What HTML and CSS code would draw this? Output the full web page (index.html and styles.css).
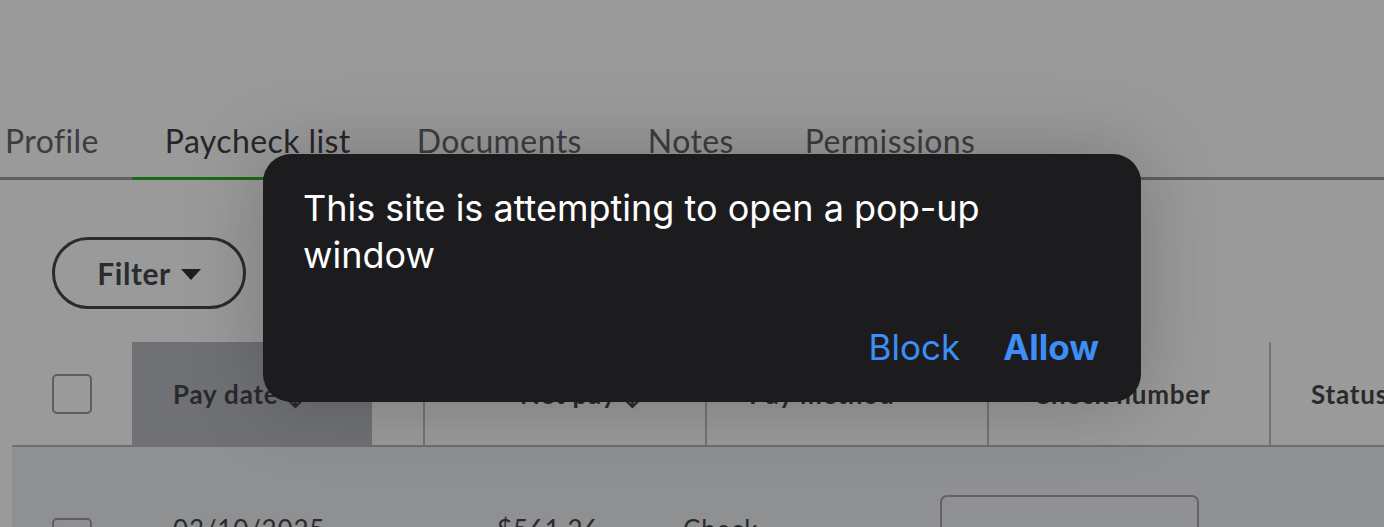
FILE: index.html
```html
<!DOCTYPE html>
<html lang="en">
<head>
  <meta charset="UTF-8" />
  <title>Paycheck list</title>
  <link rel="stylesheet" href="styles.css">
</head>
<body>
<div class="page">
  <nav class="tabs">
    <a class="tab">Profile</a>
    <a class="tab active">Paycheck list</a>
    <a class="tab">Documents</a>
    <a class="tab">Notes</a>
    <a class="tab">Permissions</a>
  </nav>

  <div class="toolbar">
    <button class="filter">Filter <span class="caret"></span></button>
  </div>

  <div class="table">
    <div class="row head">
      <div class="cell c-check"><span class="box"></span></div>
      <div class="cell c-date sorted">Pay date ↓</div>
      <div class="cell c-gap"></div>
      <div class="cell c-net sep">Net pay ↓</div>
      <div class="cell c-method sep">Pay method</div>
      <div class="cell c-num sep">Check number</div>
      <div class="cell c-status sep">Status</div>
    </div>
    <div class="row body">
      <div class="cell c-check"><span class="box"></span></div>
      <div class="cell c-date">03/10/2025</div>
      <div class="cell c-gap"></div>
      <div class="cell c-net">$561.26</div>
      <div class="cell c-method">Check</div>
      <div class="cell c-num"><span class="field"></span></div>
      <div class="cell c-status"></div>
    </div>
  </div>
</div>

<!-- popup prompt -->
<div class="dialog">
  <p class="msg">This site is attempting to open a pop-up window</p>
  <div class="actions">
    <a class="btn">Block</a>
    <a class="btn strong">Allow</a>
  </div>
</div>
</body>
</html>
```

FILE: styles.css
```css
body { margin: 0; height: 527px; background: #9a9a9a; font-family: Lato, "Noto Sans", sans-serif; color: #2c2c2e; overflow: hidden; }
.page { padding-top: 122px; }

.tabs { display: flex; margin-left: -28px; border-bottom: 3px solid #5f5f62; }
.tab { padding: 0 33px 17px; font-size: 32px; letter-spacing: 0.4px; color: #3d3d40; border-bottom: 3px solid transparent; margin-bottom: -3px; line-height: 38px; }
.tab.active { color: #262628; border-bottom-color: #1b6a13; }
.tab:nth-child(4) { padding-right: 38px; }

.toolbar { padding: 57px 0 0 52px; }
.filter { display: flex; align-items: center; gap: 10px; height: 72px; width: 194px; justify-content: center; border: 3px solid #2b2b2b; border-radius: 36px; background: transparent; font-family: Lato, sans-serif; font-weight: 700; font-size: 30px; letter-spacing: 0.5px; color: #2b2b2d; padding: 0; }
.caret { width: 0; height: 0; border-left: 10px solid transparent; border-right: 10px solid transparent; border-top: 11px solid #1e1e1e; margin-top: 3px; }

.table { margin-top: 33px; margin-left: 12px; }
.row { display: flex; overflow: hidden; }
.row.head { height: 103px; border-bottom: 2px solid #6f6f73; }
.row.body { background: #8f9092; height: 120px; }
.cell { flex-shrink: 0; display: flex; align-items: center; font-size: 26px; letter-spacing: 0.8px; line-height: 32px; box-sizing: border-box; white-space: nowrap; }
.head .cell { font-weight: 700; color: #2a2a2c; }
.body .cell { align-items: flex-start; padding-top: 66px; color: #2a2a2c; }
.c-check { width: 120px; padding-left: 40px; }
.c-date { width: 240px; padding-left: 41px; }
.c-gap { width: 51px; }
.c-net { width: 282px; justify-content: flex-end; padding-right: 62px; }
.c-method { width: 282px; padding-left: 42px; }
.c-num { width: 282px; padding-left: 44px; }
.c-status { width: 200px; padding-left: 40px; }
.sep { border-left: 2px solid #737377; }
.sorted { background: #6f7175; }
.box { display: block; width: 36px; height: 36px; border: 2px solid #5e5e62; border-radius: 5px; }
.body .c-check { padding-top: 71px; }
.body .c-net { justify-content: flex-start; padding: 66px 0 0 74px; }
.body .c-method { padding-left: 0; margin-left: -22px; width: 304px; }
.body .c-num { padding: 48px 0 0 0; margin-left: -47px; width: 329px; }
.field { display: block; width: 259px; height: 60px; border: 2px solid #636367; border-radius: 7px; box-sizing: border-box; }

.dialog { position: absolute; left: 263px; top: 154px; width: 878px; height: 248px; box-sizing: border-box; background: #1c1c1e; border-radius: 28px; padding: 31px 40px 0; box-shadow: 0 0 80px rgba(0,0,0,0.22); font-family: Inter, Roboto, sans-serif; }
.msg { margin: 0; color: #fff; font-size: 36px; line-height: 47px; width: 740px; }
.actions { display: flex; justify-content: flex-end; gap: 43px; margin-top: 48px; padding-right: 2px; }
.btn { color: #3d8ef6; font-size: 35px; line-height: 40px; }
.btn.strong { font-weight: 700; }
```
